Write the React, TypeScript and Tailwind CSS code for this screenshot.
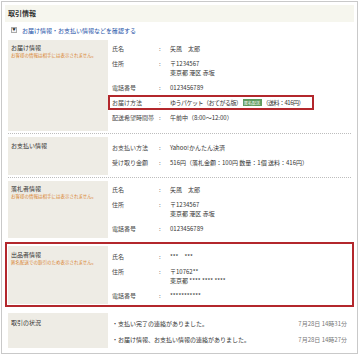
import React from 'react';

const font = { fontFamily: '"Noto Sans CJK JP", "Noto Sans", sans-serif' };

// one label : value row
const Row = ({ label, lines, boxed = false }: { label: string; lines: React.ReactNode[]; boxed?: boolean }) => (
  <div
    className={`flex pl-[4px] py-[3px] leading-[9px] ${boxed ? 'w-[206px] shadow-[inset_0_0_0_2px_#b3272c]' : ''}`}
  >
    <div className="w-[47px] shrink-0 text-[#444]">{label}</div>
    <div className="w-[11px] shrink-0 text-[#555]">:</div>
    <div className="flex flex-col text-[#333]">
      {lines.map((l, i) => (
        <div key={i} className="whitespace-nowrap">
          {l}
        </div>
      ))}
    </div>
  </div>
);

const Panel = ({ title, note, pt }: { title: string; note?: string; pt: string }) => (
  <div className={`w-[100px] shrink-0 bg-[#eeece5] pl-[3px] ${pt}`}>
    <div className="text-[6px] leading-[9px] text-[#333]">{title}</div>
    {note && <div className="text-[4.5px] leading-[7px] text-[#d9822f] whitespace-nowrap">{note}</div>}
  </div>
);

const Dots = ({ mt, mb }: { mt: string; mb: string }) => (
  <div className={`${mt} ${mb} border-t border-dotted border-[#bdbdbd]`} />
);

export default function App() {
  return (
    <div className="w-[360px] h-[355px] bg-white overflow-hidden text-[6px]" style={font}>
      <div className="ml-[1px] mt-[1px] w-[357px] h-[353px] border border-[#c9c9c9]">
        {/* header */}
        <div className="mx-[3px] mt-[3px] h-[17px] bg-[#f6f6ee] flex items-center pl-[3px]">
          <span className="text-[7px] font-bold text-[#333]">取引情報</span>
        </div>

        {/* toggle link */}
        <div className="h-[18px] pb-[2px] flex items-center pl-[9px]">
          <span className="w-[6px] h-[6px] border border-[#aaa] bg-[#f4f4f4] flex items-center justify-center">
            <span className="text-[3.5px] leading-none text-[#222]">▼</span>
          </span>
          <span className="ml-[5px] text-[#2552a8]">お届け情報・お支払い情報などを確認する</span>
        </div>

        <div className="mx-[6px]">
          {/* お届け情報 */}
          <div className="flex">
            <Panel title="お届け情報" note="お客様の情報は相手には表示されません。" pt="pt-[3px]" />
            <div className="flex-1 pt-[1px] pb-[6px]">
              <Row label="氏名" lines={['矢風　太郎']} />
              <Row label="住所" lines={['〒1234567', '東京都 港区 赤坂']} />
              <Row label="電話番号" lines={['0123456789']} />
              <Row
                label="お届け方法"
                boxed
                lines={[
                  <span className="flex items-center tracking-[-0.5px]">
                    ゆうパケット（おてがる版）
                    <span className="mx-[1px] px-[1.5px] h-[7px] flex items-center bg-[#5f9c5f] text-white text-[4px] leading-none tracking-normal">
                      匿名配送
                    </span>
                    （送料：416円）
                  </span>,
                ]}
              />
              <Row label="配送希望時間帯" lines={['午前中（8:00～12:00）']} />
            </div>
          </div>

          <Dots mt="mt-[2px]" mb="mb-[3px]" />

          {/* お支払い情報 */}
          <div className="flex">
            <Panel title="お支払い情報" pt="pt-[4px]" />
            <div className="flex-1 pt-[3px] pb-[5px]">
              <Row label="お支払い方法" lines={['Yahoo!かんたん決済']} />
              <Row label="受け取り金額" lines={['516円（落札金額：100円 数量：1個 送料：416円）']} />
            </div>
          </div>

          <Dots mt="mt-[2px]" mb="mb-[3px]" />

          {/* 落札者情報 */}
          <div className="flex">
            <Panel title="落札者情報" note="お客様の情報は相手には表示されません。" pt="pt-[3px]" />
            <div className="flex-1 pt-[1px] pb-[2px]">
              <Row label="氏名" lines={['矢風　太郎']} />
              <Row label="住所" lines={['〒1234567', '東京都 港区 赤坂']} />
              <Row label="電話番号" lines={['0123456789']} />
            </div>
          </div>
        </div>

        {/* 出品者情報 */}
        <div className="mx-[3px] mt-[4px] border-2 border-[#b3272c] pl-[1px] pr-[1px] pt-[2px] pb-[1px]">
          <div className="flex">
            <Panel title="出品者情報" note="匿名配送での取引のため表示されません。" pt="pt-[4px]" />
            <div className="flex-1 pt-[3px] pb-[1px]">
              <Row label="氏名" lines={['***　***']} />
              <Row label="住所" lines={['〒10762**', '東京都 **** **** ****']} />
              <Row label="電話番号" lines={['***********']} />
            </div>
          </div>
        </div>

        {/* 取引の状況 */}
        <div className="mx-[6px] mt-[6px] flex">
          <Panel title="取引の状況" pt="pt-[5px]" />
          <div className="flex-1 pt-[2px] pb-[1px] text-[#333]">
            <div className="flex justify-between pl-[4px] pr-[4px] py-[3.5px] leading-[9px]">
              <span>・支払い完了の連絡がありました。</span>
              <span className="text-[#777]">7月28日 14時31分</span>
            </div>
            <div className="flex justify-between pl-[4px] pr-[4px] py-[3.5px] leading-[9px]">
              <span>・お届け情報、お支払い情報の連絡がありました。</span>
              <span className="text-[#777]">7月28日 14時27分</span>
            </div>
          </div>
        </div>
      </div>
    </div>
  );
}
